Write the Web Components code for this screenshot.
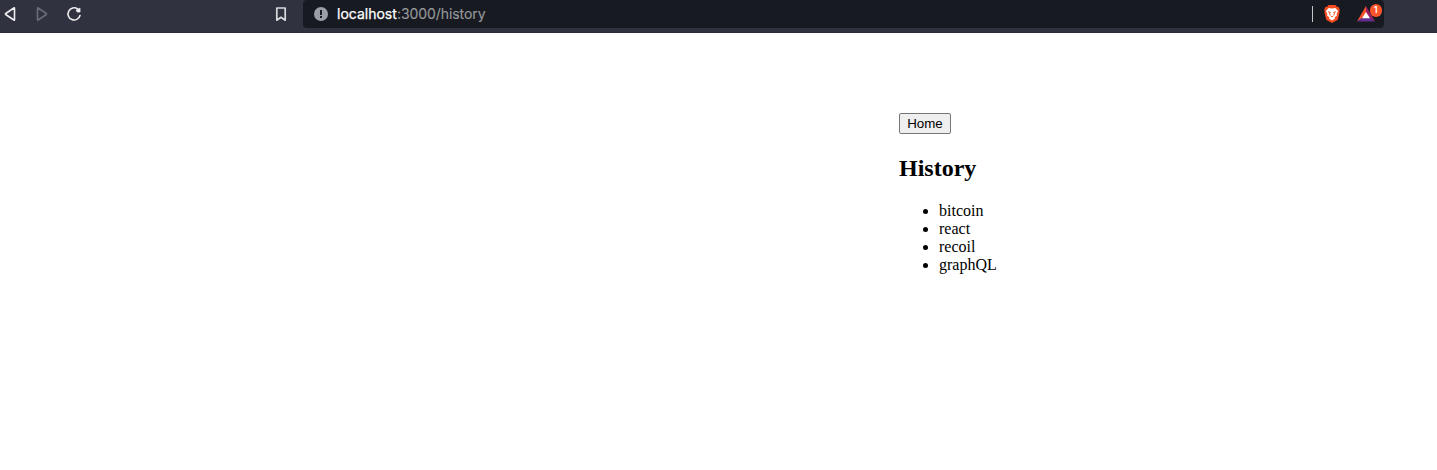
<!DOCTYPE html>
<html lang="en">
<head>
<meta charset="utf-8">
<title>History</title>
<style>
body { margin: 0; background: #fff; color: #000; font-family: "Liberation Serif", "Times New Roman", serif; font-size: 16px; overflow: hidden; }
</style>
</head>
<body>
<browser-toolbar>
  <address-bar><span slot="host">localhost</span><span slot="path">:3000/history</span></address-bar>
</browser-toolbar>
<history-page>
  <home-button slot="action">Home</home-button>
  <span slot="title">History</span>
  <history-item>bitcoin</history-item>
  <history-item>react</history-item>
  <history-item>recoil</history-item>
  <history-item>graphQL</history-item>
</history-page>
<script>
function define(name, markup) {
  const template = document.createElement('template');
  template.innerHTML = markup;
  customElements.define(name, class extends HTMLElement {
    constructor() {
      super();
      this.attachShadow({ mode: 'open' }).append(template.content.cloneNode(true));
    }
  });
}

define('browser-toolbar', `
  <style>
    :host { display: flex; align-items: flex-start; height: 33px; box-sizing: border-box; background: #303240; border-bottom: 1px solid #292b38; }
    svg { display: block; flex: none; height: 28px; fill: none; stroke: #eeeef0; stroke-width: 1.6; stroke-linejoin: round; stroke-linecap: round; }
    .nav { display: flex; width: 303px; flex: none; }
    .forward { stroke: #6b6c77; margin-left: 12px; }
    .reload { margin-left: 12px; }
    .bookmark { margin-left: auto; margin-right: 12px; stroke: #d8d9dc; }
  </style>
  <div class="nav">
    <svg width="20" viewBox="0 0 20 28"><path d="M14.5 8.2v11.6q0 .6-.6.2L5.7 14.5q-.6-.5 0-1l8.2-5.5q.6-.4.6.2z"/></svg>
    <svg class="forward" width="20" viewBox="0 0 20 28"><path d="M5.5 8.2v11.6q0 .6.6.2l8.2-5.5q.6-.5 0-1L6.1 8q-.6-.4-.6.2z"/></svg>
    <svg class="reload" width="20" viewBox="0 0 20 28"><path d="M13.6 8.900A6.100 6.100 0 1 0 16 15.500" stroke-width="1.600"/><path d="M16 8.500v3.500h-2.500q-1.300-.5-1.200-2l2-1z" fill="#eeeef0" stroke-width=".8"/></svg>
    <svg class="bookmark" width="20" viewBox="0 0 20 28"><path d="M5.800 8h8.400v12.200L10 17.300l-4.200 2.900z" stroke-width="1.700"/></svg>
  </div>
  <slot></slot>
`);

define('address-bar', `
  <style>
    :host { display: flex; align-items: center; width: 1081px; height: 28px; box-sizing: border-box; padding-left: 10px; border-radius: 4px; background: #171a21; font: 14px/28px Inter, sans-serif; }
    svg { display: block; flex: none; }
    .host { margin-left: 8px; color: #fff; -webkit-text-stroke: .25px #fff; width: 60px; white-space: nowrap; }
    .path { color: #96979a; -webkit-text-stroke: .15px #96979a; white-space: nowrap; letter-spacing: -.08px; }
    .rule { margin-left: auto; width: 1px; height: 16px; background: #c4c5c8; }
    .lion { margin-left: 10px; }
    .rewards { position: relative; width: 27px; height: 28px; margin-left: 16px; }
    .badge { position: absolute; left: 12.500px; top: 4px; width: 12.500px; height: 12.500px; border-radius: 50%; background: #fb542b; color: #fff; font: 600 9px/12px Inter, sans-serif; text-align: center; }
  </style>
  <svg width="16" height="28" viewBox="0 0 16 28"><circle cx="8" cy="14" r="7" fill="#9b9da7"/><path d="M8 10v5" stroke="#171a21" stroke-width="2"/><path d="M7 16h2v2H7z" fill="#171a21"/></svg>
  <span class="host"><slot name="host"></slot></span><span class="path"><slot name="path"></slot></span>
  <i class="rule"></i>
  <svg class="lion" width="18" height="28" viewBox="0 0 18 28"><path d="M5.600 5h6.800l1.500 1.700 1.700.2 1.200 2.600-.5 1.500.3 1.500-1.700 6.500q-.3 1-1.200 1.600L9 23l-4.700-2.400q-.9-.6-1.200-1.600l-1.700-6.500.3-1.500-.5-1.500 1.200-2.600 1.700-.2z" fill="#f44b20"/><path d="M5.700 7.900l3.300.5 3.300-.5 2.800 3.200-1.400 3 .1 1.800-2.300 1.400.6 1.300L9 20.500l-3.100-1.900.6-1.300-2.300-1.400.1-1.800-1.400-3z" fill="#fff"/><path d="M4.800 11.300l2.900.7-.4 1-1.800-.4zm8.400 0l-2.900.7.4 1 1.800-.4zM7 15.300l2 1 2-1-1.400 1.800H8.400zM6.600 12.500l1 2-.7 1-.9-2zm4.800 0l-1 2 .7 1 .9-2z" fill="#f44b20"/></svg>
  <div class="rewards">
    <svg width="20" height="28" viewBox="0 0 20 28"><path d="M9 6L0 21.500l9-6z" fill="#fb542b"/><path d="M9 6l9 15.500-9-6z" fill="#9e1f63"/><path d="M0 21.500h18l-5.500-4h-7z" fill="#662d91"/><path d="M9 12l-4 6.200h8z" fill="#fff"/></svg>
    <span class="badge">1</span>
  </div>
`);

define('history-page', `
  <style>
    :host { display: block; padding: 80px 0 0 899px; }
    slot[name="action"] { display: flex; }
    h2 { margin: 20px 0 19px; font-size: 24px; line-height: 29px; font-weight: 700; }
    .list { padding-left: 40px; }
  </style>
  <slot name="action"></slot>
  <h2><slot name="title"></slot></h2>
  <div class="list"><slot></slot></div>
`);

define('home-button', `
  <style>
    :host { display: flex; }
    button { width: 52px; height: 21px; box-sizing: border-box; margin: 0; padding: 0; border: 1px solid #767676; border-radius: 2px; background: #efefef; color: #000; font: 13.333px/18px "Liberation Sans", Arial, sans-serif; white-space: nowrap; }
  </style>
  <button type="button"><slot></slot></button>
`);

define('history-item', `
  <style>
    :host { display: list-item; list-style: disc outside; line-height: 18px; }
  </style>
  <slot></slot>
`);
</script>
</body>
</html>
